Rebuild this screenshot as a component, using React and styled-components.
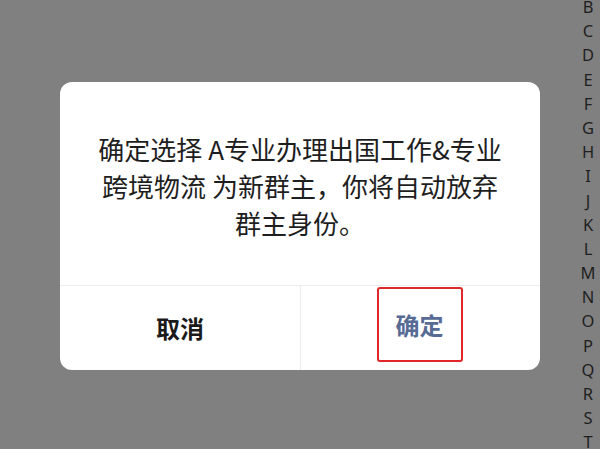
import styled, { createGlobalStyle } from 'styled-components';

const GlobalStyle = createGlobalStyle`
  html, body {
    margin: 0;
    padding: 0;
    width: 100%;
    height: 100%;
    overflow: hidden;
    background: #808080;
    font-family: "Noto Sans CJK SC", "Noto Sans", sans-serif;
  }
`;

const LETTERS = 'BCDEFGHIJKLMNOPQRST'.split('');

const Page = styled.div`
  position: relative;
  width: 600px;
  height: 449px;
  background: #808080;
  display: flex;
  align-items: center;
  justify-content: center;
`;

const IndexBar = styled.ul`
  position: absolute;
  top: -5px;
  right: 0;
  width: 24px;
  margin: 0;
  padding: 0;
  list-style: none;
  display: flex;
  flex-direction: column;
  align-items: center;
`;

const IndexLetter = styled.li`
  height: 24.2px;
  line-height: 24.2px;
  font-family: "Noto Sans", "Open Sans", sans-serif;
  font-size: 16.5px;
  color: #1f1f1f;
`;

const Dialog = styled.div`
  width: 480px;
  margin-top: 2px;
  background: #fff;
  border-radius: 12px;
  overflow: hidden;
  display: flex;
  flex-direction: column;
`;

const Message = styled.p`
  margin: 0;
  padding: 48px 20px 44px;
  text-align: center;
  font-size: 26px;
  line-height: 37px;
  color: #1e1e1e;
`;

const Actions = styled.div`
  display: grid;
  grid-template-columns: 1fr 1fr;
  height: 84px;
  border-top: 1px solid #ececec;
`;

const Action = styled.button`
  border: none;
  background: transparent;
  padding: 0;
  font-family: inherit;
  font-size: 24px;
  font-weight: 700;
  color: ${p => (p.$primary ? '#576b95' : '#1a1a1a')};
  display: flex;
  align-items: center;
  justify-content: center;
  cursor: pointer;
  & + & {
    border-left: 1px solid #ececec;
  }
`;

const Highlight = styled.span`
  display: flex;
  align-items: center;
  justify-content: center;
  width: 86px;
  height: 75px;
  margin: 0 2px 7px 0;
  box-sizing: border-box;
  border: 2px solid #e0282a;
  border-radius: 3px;
`;

export default function App() {
  return (
    <>
      <GlobalStyle />
      <Page>
        <IndexBar>
          {LETTERS.map(l => (
            <IndexLetter key={l}>{l}</IndexLetter>
          ))}
        </IndexBar>
        <Dialog>
          <Message>
            确定选择 A专业办理出国工作&amp;专业
            <br />
            跨境物流 为新群主，你将自动放弃
            <br />
            群主身份。
          </Message>
          <Actions>
            <Action>取消</Action>
            <Action $primary>
              <Highlight>确定</Highlight>
            </Action>
          </Actions>
        </Dialog>
      </Page>
    </>
  );
}
